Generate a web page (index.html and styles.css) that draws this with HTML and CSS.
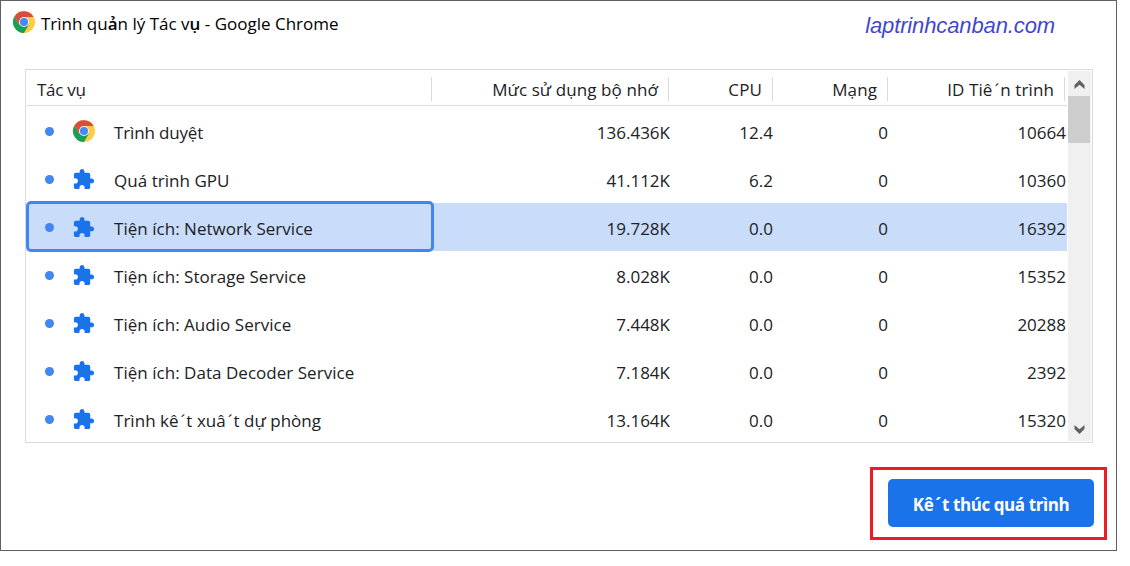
FILE: index.html
```html
<!DOCTYPE html>
<html lang="vi">
<head>
<meta charset="utf-8">
<title>Trình quản lý Tác vụ - Google Chrome</title>
<link rel="stylesheet" href="styles.css">
</head>
<body>
<svg class="defs" width="0" height="0">
  <symbol id="chrome" viewBox="0 0 48 48">
    <circle cx="24" cy="24" r="24" fill="#fc4"/>
    <path d="M24 24 13.6 30 3.2 12A24 24 0 0 0 24 48L34.4 30z" fill="#1a9f5b"/>
    <path d="M24 13H44.8A24 24 0 0 0 3.2 12L13.6 30 24 24z" fill="#db4c3f"/>
    <circle cx="24" cy="24" r="11" fill="#f1f1f1"/>
    <circle cx="24" cy="24" r="8.8" fill="#4688f4"/>
  </symbol>
  <symbol id="puzzle" viewBox="0 0 24 24">
    <path fill="#1a73e8" d="M20.5 11H19V7c0-1.1-.9-2-2-2h-4V3.500C13 2.120 11.880 1 10.500 1S8 2.120 8 3.500V5H4c-1.100 0-1.990.9-1.990 2v3.800H3.500c1.490 0 2.700 1.210 2.700 2.700s-1.210 2.700-2.700 2.700H2V20c0 1.100.9 2 2 2h3.800v-1.500c0-1.490 1.210-2.700 2.700-2.700 1.490 0 2.700 1.210 2.700 2.700V22H17c1.100 0 2-.9 2-2v-4h1.500c1.380 0 2.500-1.120 2.500-2.500S21.880 11 20.500 11z"/>
  </symbol>
</svg>
<div class="window">
  <header class="titlebar">
    <svg class="logo"><use href="#chrome"/></svg>
    <span class="title">Trình qu<b>ả</b>n lý Tác v<b>ụ</b> - Google Chrome</span>
    <span class="site">laptrinhcanban.com</span>
  </header>
  <main class="table">
    <div class="grid">
      <div class="head">
        <span class="th first">Tác vụ</span><span class="th">Mức sử dụng bộ nhớ</span><span class="th">CPU</span><span class="th">Mạng</span><span class="th">ID Tiê<span class="tone">´</span>n trình</span>
      </div>
      <div class="row"><div class="name"><i class="dot"></i><svg class="chrome"><use href="#chrome"/></svg><span class="label short">Trình duyệt</span></div><span>136.436K</span><span>12.4</span><span>0</span><span>10664</span></div>
      <div class="row"><div class="name"><i class="dot"></i><svg class="puzzle"><use href="#puzzle"/></svg><span class="label">Quá trình GPU</span></div><span>41.112K</span><span>6.2</span><span>0</span><span>10360</span></div>
      <div class="row selected"><div class="name"><i class="dot"></i><svg class="puzzle"><use href="#puzzle"/></svg><span class="label">Tiện ích: Network Service</span></div><span>19.728K</span><span>0.0</span><span>0</span><span>16392</span></div>
      <div class="row"><div class="name"><i class="dot"></i><svg class="puzzle"><use href="#puzzle"/></svg><span class="label">Tiện ích: Storage Service</span></div><span>8.028K</span><span>0.0</span><span>0</span><span>15352</span></div>
      <div class="row"><div class="name"><i class="dot"></i><svg class="puzzle"><use href="#puzzle"/></svg><span class="label">Tiện ích: Audio Service</span></div><span>7.448K</span><span>0.0</span><span>0</span><span>20288</span></div>
      <div class="row"><div class="name"><i class="dot"></i><svg class="puzzle"><use href="#puzzle"/></svg><span class="label">Tiện ích: Data Decoder Service</span></div><span>7.184K</span><span>0.0</span><span>0</span><span>2392</span></div>
      <div class="row"><div class="name"><i class="dot"></i><svg class="puzzle"><use href="#puzzle"/></svg><span class="label">Trình kê<span class="tone">´</span>t xuâ<span class="tone">´</span>t dự phòng</span></div><span>13.164K</span><span>0.0</span><span>0</span><span>15320</span></div>
    </div>
    <div class="scrollbar">
      <svg class="arrow" viewBox="0 0 11 9"><path d="M.5 9V5L5.500 0l5 5v4L5.500 4.700z"/></svg>
      <div class="thumb"></div>
      <svg class="arrow down" viewBox="0 0 11 9"><path d="M.5 0V4l5 5 5-5V0L5.500 4.300z"/></svg>
    </div>
  </main>
  <footer class="footer">
    <div class="highlight"><button class="end">Kê<span class="tone">´</span>t thúc quá trình</button></div>
  </footer>
</div>
</body>
</html>
```
FILE: styles.css
```css
* { box-sizing: border-box; }
body {
  margin: 0;
  background: #fff;
  color: #202124;
  font: 17px/24px "Open Sans", "Noto Sans", sans-serif;
}
.defs { display: block; }
svg { flex: none; }
.window {
  width: 1117px;
  height: 551px;
  border: 1px solid #5f5f68;
}
.titlebar {
  display: flex;
  align-items: flex-start;
  height: 68px;
  padding: 10px 61px 0 12px;
  color: #000;
}
.logo { width: 22px; height: 22px; }
.title { margin: 1px 0 0 6px; }
.title b { font-weight: 600; }
.site {
  margin-left: auto;
  margin-top: 2px;
  color: #3f48cc;
  font: italic 22px/26px "Liberation Sans", Arial, sans-serif;
  letter-spacing: -0.12px;
}
.table {
  display: flex;
  width: 1068px;
  height: 374px;
  margin-left: 24px;
  padding: 1px;
  border: 1px solid #d9dadc;
}
.grid { width: 1040px; }
.head {
  display: grid;
  grid-template-columns: 405px 237px 104px 115px 177px;
  height: 35px;
  padding-top: 6px;
  border-bottom: 1px solid #d9dadc;
}
.th {
  height: 24px;
  padding-right: 10px;
  border-right: 1px solid #d9dadc;
  text-align: right;
  line-height: 26px;
  letter-spacing: 0.1px;
  white-space: nowrap;
}
.th.first { padding-left: 10px; text-align: left; letter-spacing: -0.25px; }
.tone { padding: 0 1px 0 2px; }
.row {
  display: grid;
  grid-template-columns: 407px 237px 103px 115px 178px;
  height: 48px;
  line-height: 51px;
  text-align: right;
}
.row:nth-child(2) { margin-top: 1px; }
.row > span { padding-right: 1px; white-space: nowrap; }
.name {
  display: flex;
  align-items: center;
  height: 48px;
  padding-left: 18px;
  white-space: nowrap;
}
.label { padding-top: 3px; line-height: 24px; letter-spacing: 0.03px; }
.label.short { letter-spacing: -0.15px; }
.dot {
  flex: none;
  width: 9px;
  height: 9px;
  margin-right: 19px;
  border-radius: 50%;
  background: #4285f4;
}
.chrome { width: 22px; height: 22px; margin-right: 19px; }
.puzzle { width: 23px; height: 23px; margin: 0 19px 0 -1px; }
.selected { background: #c9ddfa; }
.selected .name {
  height: 51px;
  width: 408px;
  margin: -2px 0 0 -1px;
  padding: 1px 0 0 16px;
  border: 3px solid #4285f4;
  border-radius: 5px;
}
.scrollbar {
  display: flex;
  flex-direction: column;
  align-items: center;
  width: 23px;
  margin-left: 1px;
  padding: 9px 0 7px;
  background: #f0f0f0;
}
.arrow { width: 11px; height: 9px; fill: #606060; }
.down { margin-top: auto; }
.thumb {
  align-self: flex-start;
  width: 22px;
  height: 47px;
  margin-top: 7px;
  background: #cdcdcd;
}
.footer {
  display: flex;
  justify-content: flex-end;
  padding: 24px 9px 0 0;
}
.highlight {
  width: 237px;
  height: 73px;
  padding: 9px 10px 0 15px;
  border: 3px solid #ed1c24;
}
.end {
  width: 206px;
  height: 48px;
  padding: 3px 0 0;
  border: 0;
  border-radius: 5px;
  background: #1a73e8;
  color: #fff;
  font: 700 17px/24px "Open Sans", "Noto Sans", sans-serif;
  letter-spacing: -0.42px;
  white-space: nowrap;
}
```
